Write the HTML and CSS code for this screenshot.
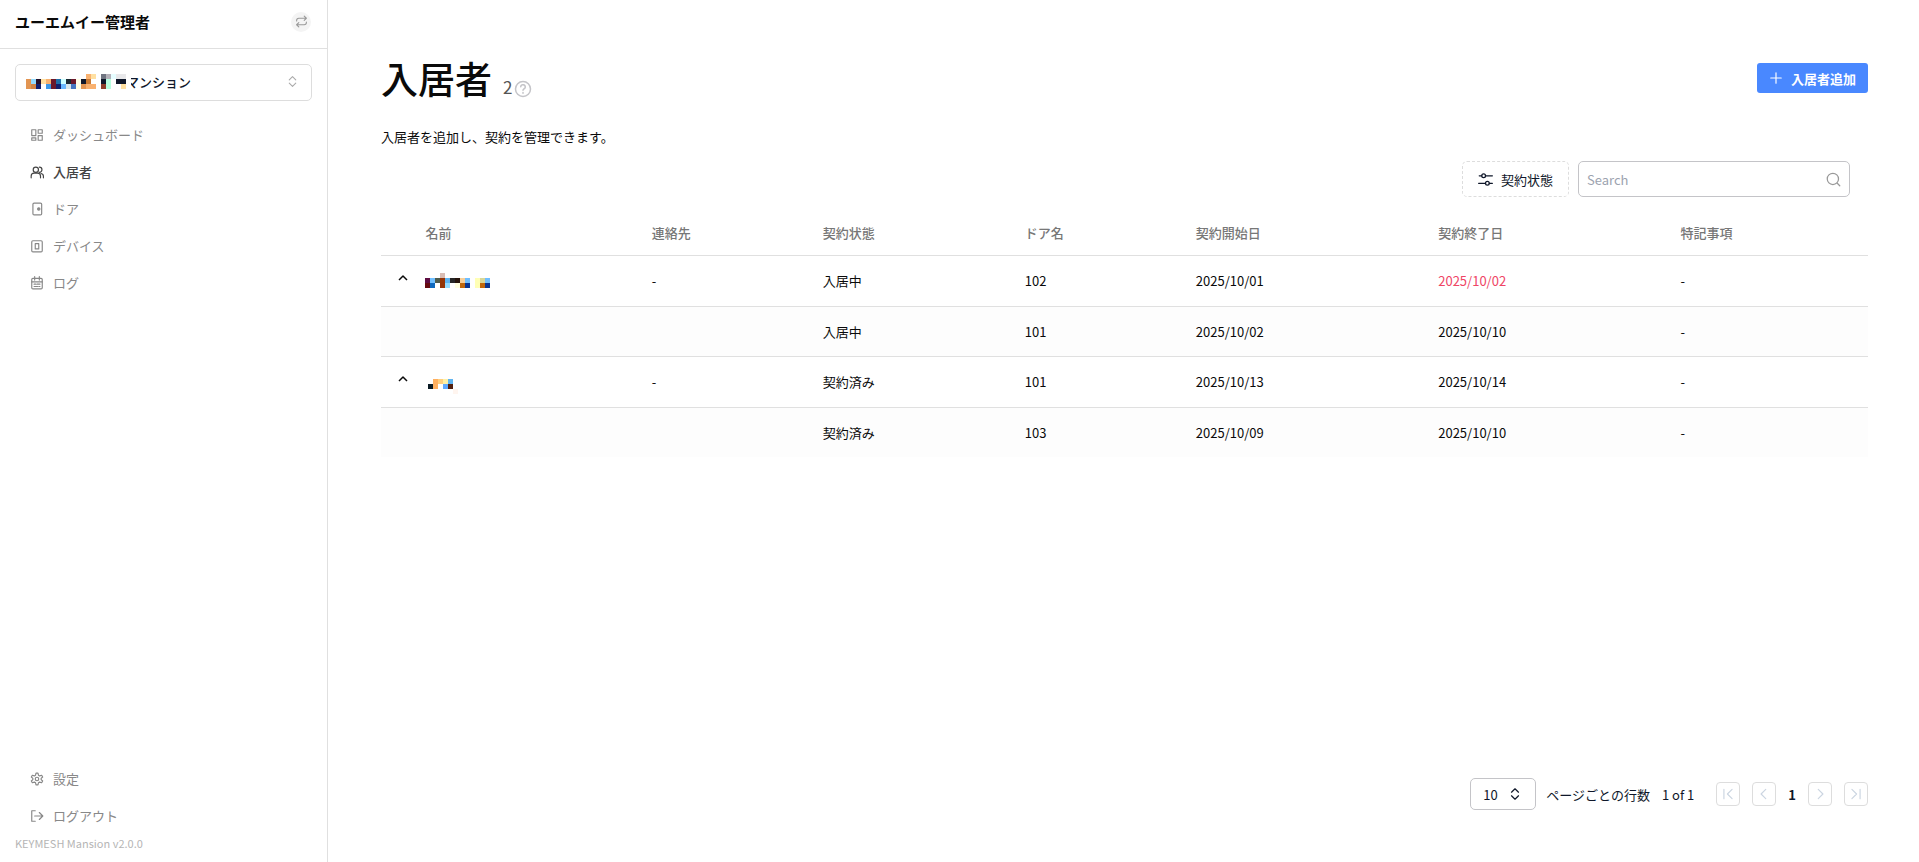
FILE: index.html
```
<!DOCTYPE html>
<html lang="ja">
<head>
	<meta charset="UTF-8">
	<title>入居者 | KEYMESH Mansion</title>
	<link rel="stylesheet" href="styles.css">
</head>
<body>
	<div class="layout">
		<aside class="sidebar">
			<div class="account">
				<span class="account-name">ユーエムイー管理者</span>
				<button type="button" class="switch-btn" aria-label="切り替え">
					<svg class="icon" width="13" height="13" viewBox="0 0 24 24"><path d="m17 2 4 4-4 4M3 11v-1a4 4 0 0 1 4-4h14M7 22l-4-4 4-4M21 13v1a4 4 0 0 1-4 4H3"/></svg>
				</button>
			</div>
			<button type="button" class="site-select" aria-haspopup="listbox" aria-label="マンション">
				<svg class="mosaic site-mosaic" width="105" height="15" viewBox="0 0 21 3" shape-rendering="crispEdges">
					<path fill="#fff" d="M0 0h21v3H0z"/>
					<path fill="#e29552" d="M0 1h1v2H0zM11 2h1v1h-1z"/>
					<path fill="#93dbff" d="M1 1h1v1H1z"/>
					<path fill="#d08545" d="M1 2h1v1H1z"/>
					<path fill="#26122b" d="M2 1h1v1H2z"/>
					<path fill="#10206f" d="M2 2h1v1H2zM6 2h1v1H6z"/>
					<path fill="#ffe0a2" d="M3 1h1v1H3zM13 0h1v1h-1zM19 2h1v1h-1z"/>
					<path fill="#f9b16f" d="M4 1h1v1H4zM12 0h1v1h-1zM12 2h2v1h-2z"/>
					<path fill="#3b98e8" d="M4 2h1v1H4z"/>
					<path fill="#6a182b" d="M5 1h1v2H5zM9 1h1v1H9z"/>
					<path fill="#1f6fa8" d="M6 1h1v1H6z"/>
					<path fill="#ceffff" d="M7 1h1v1H7z"/>
					<path fill="#69b8ff" d="M7 2h1v1H7z"/>
					<path fill="#1c2a33" d="M8 1h1v1H8z"/>
					<path fill="#d8e6ea" d="M8 2h1v1H8z"/>
					<path fill="#4575c0" d="M9 2h1v1H9z"/>
					<path fill="#fffee6" d="M10 1h1v2h-1z"/>
					<path fill="#10182b" d="M11 1h1v1h-1zM15 1h1v1h-1zM18 1h2v1h-2z"/>
					<path fill="#c97b35" d="M12 1h1v1h-1z"/>
					<path fill="#707480" d="M15 0h1v1h-1z"/>
					<path fill="#b4b1b9" d="M16 0h1v1h-1z"/>
					<path fill="#e6fdff" d="M17 0h1v1h-1z"/>
					<path fill="#e8e8ea" d="M18 0h2v1h-2z"/>
					<path fill="#8d3c2a" d="M15 2h1v1h-1z"/>
					<path fill="#b8ffe0" d="M16 1h1v2h-1z"/>
				</svg>
				<span class="site-name">マンション</span>
				<svg class="icon site-arrow" width="13" height="13" viewBox="0 0 24 24"><path d="m6 9 6-6 6 6M6 15l6 6 6-6"/></svg>
			</button>
			<nav class="menu">
				<a href="#dashboard">
					<svg class="icon" width="14" height="14" viewBox="0 0 24 24"><path d="M3 3h7v10H3zM14 3h7v6h-7zM14 13h7v8h-7zM3 17h7v4H3z"/></svg>
					ダッシュボード
				</a>
				<a href="#residents" class="active" aria-current="page">
					<svg class="icon" width="14" height="14" viewBox="0 0 24 24"><circle cx="10" cy="8" r="4.5"/><path d="M2 22v-3a5 5 0 0 1 5-5h6a5 5 0 0 1 5 5v3M16 3.5a4.5 4.5 0 0 1 0 9M19 14.5a5 5 0 0 1 4 5V22"/></svg>
					入居者
				</a>
				<a href="#doors">
					<svg class="icon" width="14" height="14" viewBox="0 0 24 24"><rect x="5" y="2" width="15" height="20" rx="2"/><circle cx="15" cy="12" r="2" fill="currentColor"/></svg>
					ドア
				</a>
				<a href="#devices">
					<svg class="icon" width="14" height="14" viewBox="0 0 24 24"><rect x="3" y="3" width="18" height="19" rx="2"/><rect x="9" y="8" width="6" height="9"/></svg>
					デバイス
				</a>
				<a href="#logs">
					<svg class="icon" width="14" height="14" viewBox="0 0 24 24"><rect x="3" y="4" width="18" height="18" rx="2"/><path d="M3 10h18M8 1v6M16 1v6M7 14h3M12 14h5M7 18h6M15 18h2"/></svg>
					ログ
				</a>
			</nav>
			<div class="menu menu-bottom">
				<a href="#settings">
					<svg class="icon" width="14" height="14" viewBox="0 0 24 24"><path d="M9.5 5.5 10.3 2h3.4l.8 3.5 2 1.2L20 5.600l1.700 3-2.600 2.400v2l2.600 2.400-1.700 3-3.500-1.100-2 1.200-.8 3.500h-3.400l-.8-3.500-2-1.200L4 18.400l-1.700-3L4.900 13v-2L2.300 8.600l1.700-3 3.500 1.100z"/><circle cx="12" cy="12" r="3"/></svg>
					設定
				</a>
				<a href="#logout">
					<svg class="icon" width="14" height="14" viewBox="0 0 24 24"><path d="M9 3H3v18h6M8 12h14M16 6l6 6-6 6"/></svg>
					ログアウト
				</a>
			</div>
			<p class="version">KEYMESH Mansion v2.0.0</p>
		</aside>

		<main class="content">
			<header class="page-head">
				<div class="title">
					<h1>入居者</h1>
					<span class="count">2</span>
					<svg class="icon help" width="18" height="18" viewBox="0 0 24 24"><circle cx="12" cy="12" r="10"/><path d="M9 9a3 3 0 0 1 6 .5c0 2-3 2.500-3 4M12 16.500v1"/></svg>
				</div>
				<button type="button" class="add-btn">
					<svg class="icon" width="14" height="14" viewBox="0 0 24 24"><path d="M12 3v18M3 12h18"/></svg>
					入居者追加
				</button>
			</header>
			<p class="description">入居者を追加し、契約を管理できます。</p>

			<div class="toolbar">
				<button type="button" class="filter-btn">
					<svg class="icon" width="15" height="15" viewBox="0 0 24 24"><path d="M2 6h4M12 6h11M1 18h11M18 18h5"/><circle cx="9" cy="6" r="3"/><circle cx="15" cy="18" r="3"/></svg>
					契約状態
				</button>
				<label class="search">
					<input type="search" placeholder="Search" aria-label="Search">
					<svg class="icon" width="15" height="15" viewBox="0 0 24 24"><circle cx="11" cy="11" r="9"/><path d="m18 18 4 4"/></svg>
				</label>
			</div>

			<table class="residents">
				<colgroup>
					<col class="col-toggle"><col class="col-name"><col class="col-contact"><col class="col-status">
					<col class="col-door"><col class="col-date"><col class="col-date"><col>
				</colgroup>
				<thead>
					<tr>
						<th></th>
						<th>名前</th>
						<th>連絡先</th>
						<th>契約状態</th>
						<th>ドア名</th>
						<th>契約開始日</th>
						<th>契約終了日</th>
						<th>特記事項</th>
					</tr>
				</thead>
				<tbody>
					<tr>
						<td class="toggle"><button type="button" aria-label="閉じる" aria-expanded="true"><svg class="icon" width="18" height="18" viewBox="0 0 18 18"><path d="m5 9 4-4 4 4"/></svg></button></td>
						<td>
							<svg class="mosaic" width="65" height="15" viewBox="0 0 13 3" shape-rendering="crispEdges">
								<path fill="#dabdb4" d="M3 0h1v1H3z"/>
								<path fill="#5e0d42" d="M0 1h1v1H0z"/>
								<path fill="#660a0f" d="M0 2h1v1H0z"/>
								<path fill="#70bfff" d="M1 1h1v1H1zM8 1h1v1H8zM12 1h1v1h-1z"/>
								<path fill="#0f68be" d="M1 2h1v1H1z"/>
								<path fill="#4e5a4c" d="M2 1h1v1H2z"/>
								<path fill="#933608" d="M3 1h1v2H3z"/>
								<path fill="#5fb4f0" d="M4 1h1v1H4z"/>
								<path fill="#93dbff" d="M4 2h1v1H4z"/>
								<path fill="#262626" d="M5 1h1v1H5z"/>
								<path fill="#26140c" d="M6 1h1v1H6z"/>
								<path fill="#ffffe0" d="M6 2h1v1H6z"/>
								<path fill="#f7cf99" d="M7 1h1v1H7z"/>
								<path fill="#bf670c" d="M7 2h1v1H7zM11 2h1v1h-1z"/>
								<path fill="#0a3590" d="M8 2h1v1H8zM12 2h1v1h-1z"/>
								<path fill="#ffffb5" d="M10 1h1v2h-1z"/>
								<path fill="#d9d797" d="M11 1h1v1h-1z"/>
							</svg>
						</td>
						<td>-</td>
						<td>入居中</td>
						<td>102</td>
						<td>2025/10/01</td>
						<td class="expired">2025/10/02</td>
						<td>-</td>
					</tr>
					<tr class="sub">
						<td></td>
						<td></td>
						<td></td>
						<td>入居中</td>
						<td>101</td>
						<td>2025/10/02</td>
						<td>2025/10/10</td>
						<td>-</td>
					</tr>
					<tr>
						<td class="toggle"><button type="button" aria-label="閉じる" aria-expanded="true"><svg class="icon" width="18" height="18" viewBox="0 0 18 18"><path d="m5 9 4-4 4 4"/></svg></button></td>
						<td>
							<svg class="mosaic" width="35" height="25" viewBox="0 0 35 25" shape-rendering="crispEdges">
								<path fill="#0a1a24" d="M3 15h5v5H3z"/>
								<path fill="#ffb060" d="M8 10h5v10H8z"/>
								<path fill="#ffcf80" d="M13 10h5v5h-5z"/>
								<path fill="#fff0a5" d="M18 10h5v5h-5z"/>
								<path fill="#60b4f0" d="M23 10h5v5h-5z"/>
								<path fill="#60a8ff" d="M18 15h5v5h-5z"/>
								<path fill="#52200f" d="M23 15h5v5h-5z"/>
								<path fill="#fff5ef" d="M28 20h5v5h-5z"/>
							</svg>
						</td>
						<td>-</td>
						<td>契約済み</td>
						<td>101</td>
						<td>2025/10/13</td>
						<td>2025/10/14</td>
						<td>-</td>
					</tr>
					<tr class="sub">
						<td></td>
						<td></td>
						<td></td>
						<td>契約済み</td>
						<td>103</td>
						<td>2025/10/09</td>
						<td>2025/10/10</td>
						<td>-</td>
					</tr>
				</tbody>
			</table>

			<footer class="pagination">
				<div class="page-size">
					<select id="page-size">
						<option>10</option>
						<option>20</option>
						<option>50</option>
					</select>
					<svg class="icon" width="14" height="14" viewBox="0 0 24 24"><path d="m6 9 6-6 6 6M6 15l6 6 6-6"/></svg>
				</div>
				<label for="page-size">ページごとの行数</label>
				<span class="page-info">1 of 1</span>
				<div class="pager">
					<button type="button" disabled aria-label="最初のページ"><svg class="icon" width="14" height="14" viewBox="0 0 24 24"><path d="M5 4v16M19 4l-8 8 8 8"/></svg></button>
					<button type="button" disabled aria-label="前のページ"><svg class="icon" width="14" height="14" viewBox="0 0 24 24"><path d="m15 4-8 8 8 8"/></svg></button>
					<strong>1</strong>
					<button type="button" disabled aria-label="次のページ"><svg class="icon" width="14" height="14" viewBox="0 0 24 24"><path d="m9 4 8 8-8 8"/></svg></button>
					<button type="button" disabled aria-label="最後のページ"><svg class="icon" width="14" height="14" viewBox="0 0 24 24"><path d="M19 4v16M5 4l8 8-8 8"/></svg></button>
				</div>
			</footer>
		</main>
	</div>
</body>
</html>
```
FILE: styles.css
```
* {
	box-sizing: border-box;
}
body {
	margin: 0;
	background: #fff;
	color: #0a0a0a;
	font: 13px/19px "Noto Sans CJK JP", sans-serif;
}
h1, p {
	margin: 0;
}
button, input, select {
	font: inherit;
	color: inherit;
}
button {
	display: flex;
	align-items: center;
	padding: 0;
	border: 0;
	background: none;
	cursor: pointer;
}
a {
	color: inherit;
	text-decoration: none;
}
.icon {
	flex: none;
	fill: none;
	stroke: currentColor;
	stroke-width: 2;
	stroke-linecap: round;
	stroke-linejoin: round;
}
.mosaic {
	display: block;
	flex: none;
}
.layout {
	display: flex;
	min-height: 100vh;
}

/* サイドバー */
.sidebar {
	flex: none;
	display: flex;
	flex-direction: column;
	width: 328px;
	border-right: 1px solid #e0e0e0;
}
.account {
	display: flex;
	align-items: center;
	justify-content: space-between;
	height: 49px;
	padding: 0 16px 5px 15px;
	border-bottom: 1px solid #e0e0e0;
}
.account-name {
	font-size: 15px;
	font-weight: 700;
}
.switch-btn {
	justify-content: center;
	width: 20px;
	height: 20px;
	border-radius: 50%;
	background: #f4f4f4;
	color: #999;
}
.site-select {
	height: 37px;
	margin: 15px;
	padding: 0 12px 2px 10px;
	border: 1px solid #ddd;
	border-radius: 5px;
	color: #0f172a;
	font-weight: 500;
}
.site-mosaic {
	z-index: 1;
	margin-right: -5px;
}
.site-arrow {
	margin-left: auto;
	color: #aaa;
}
.menu a {
	display: flex;
	align-items: center;
	gap: 9px;
	height: 37px;
	padding: 0 30px;
	color: #888;
}
.menu .active {
	color: #444;
	font-weight: 500;
}
.menu-bottom {
	margin-top: auto;
}
.version {
	padding: 0 15px 9px;
	color: #b5b5b5;
	font-size: 11px;
}

/* メイン */
.content {
	flex: 1;
	display: flex;
	flex-direction: column;
	min-width: 0;
	padding: 54px 51px 52px 53px;
}
.page-head {
	display: flex;
	align-items: center;
	justify-content: space-between;
}
.title {
	display: flex;
	align-items: baseline;
}
h1 {
	margin-right: 11px;
	font-size: 37px;
	font-weight: 500;
	line-height: 48px;
}
.count {
	color: #555;
	font-size: 17px;
}
.help {
	align-self: flex-end;
	margin: 0 0 4px 2px;
	color: #c4c4c8;
}
.add-btn {
	gap: 8px;
	height: 30px;
	padding: 0 12px;
	border-radius: 3px;
	background: #4988ff;
	color: #fff;
	font-weight: 700;
}
.description {
	margin: 25px 0 15px;
}
.toolbar {
	display: flex;
	justify-content: flex-end;
	gap: 9px;
	margin-bottom: 14px;
	padding-right: 18px;
}
.filter-btn {
	gap: 8px;
	height: 36px;
	padding: 0 15px;
	border: 1px dashed #ddd;
	border-radius: 5px;
	color: #0f172a;
}
.search {
	display: flex;
	align-items: center;
	width: 272px;
	height: 36px;
	padding: 0 8px;
	border: 1px solid #c4c4c8;
	border-radius: 5px;
	color: #999;
}
.search input {
	flex: 1;
	min-width: 0;
	padding: 0;
	border: 0;
	outline: 0;
	background: none;
	color: #0f172a;
}
.search input::placeholder {
	color: #9ca3af;
}

/* 入居者一覧 */
.residents {
	width: 100%;
	border-collapse: collapse;
	table-layout: fixed;
}
.residents th {
	height: 44px;
	padding: 0;
	color: #777;
	font-weight: 500;
	text-align: left;
}
.residents td {
	height: 51px;
	padding: 0;
	border-top: 1px solid #e0e0e0;
}
.residents .sub {
	background: #fdfdfd;
}
.residents .sub td {
	height: 50px;
}
.residents .expired {
	color: #ef4565;
}
.residents .mosaic {
	margin-left: -1px;
}
.toggle button {
	margin: 0 0 2px 13px;
}
.toggle .icon {
	stroke-width: 1.5;
	stroke-linecap: butt;
}
.col-toggle {
	width: 3%;
}
.col-name {
	width: 15.2%;
}
.col-contact {
	width: 11.5%;
}
.col-status {
	width: 13.6%;
}
.col-door {
	width: 11.5%;
}
.col-date {
	width: 16.3%;
}

/* ページネーション */
.pagination {
	display: flex;
	align-items: center;
	justify-content: flex-end;
	margin-top: auto;
	color: #0f172a;
}
.page-size {
	display: flex;
	align-items: center;
	margin-right: 10px;
}
.page-size select {
	width: 66px;
	height: 32px;
	padding: 0 12px;
	border: 1px solid #c4c4c8;
	border-radius: 5px;
	background: none;
	appearance: none;
}
.page-size .icon {
	margin-left: -28px;
	margin-right: 14px;
	pointer-events: none;
}
.page-info {
	margin: 0 22px 0 12px;
}
.pager {
	display: flex;
	align-items: center;
	gap: 12px;
}
.pager button {
	justify-content: center;
	width: 24px;
	height: 24px;
	border: 1px solid #ddd;
	border-radius: 4px;
	color: #cbd5e1;
}
```
